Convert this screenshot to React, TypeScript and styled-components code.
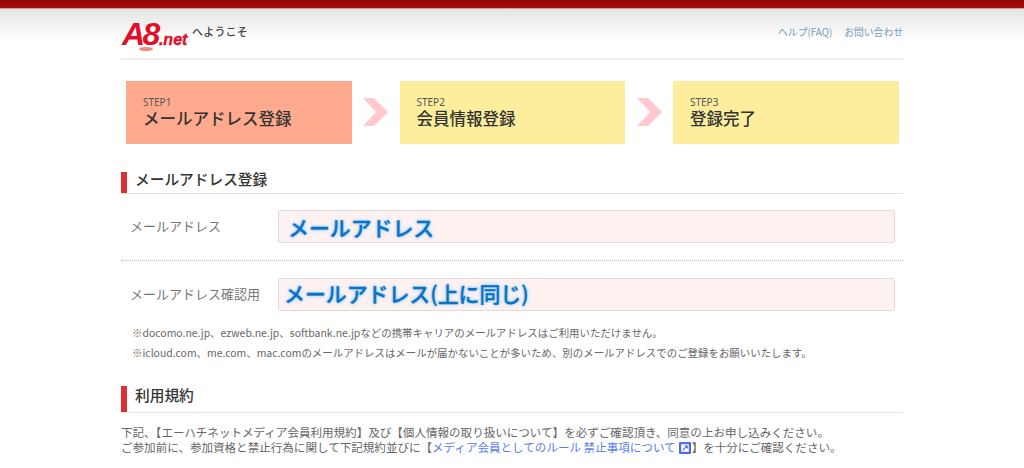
import React from "react";
import styled, { createGlobalStyle } from "styled-components";

const Global = createGlobalStyle`
  html, body { margin: 0; padding: 0; background: #fff; height: 468px; overflow: hidden; }
  body { font-family: "Noto Sans CJK JP", "Noto Sans", sans-serif; color: #666; }
`;

const TopBar = styled.div`
  height: 8px;
  background: linear-gradient(#8c0606, #b00a0a);
  border-bottom: 1px solid #c9a0a0;
`;
const HeaderBand = styled.header`
  background: linear-gradient(#e4e4e4, #fff 32px);
  height: 49px;
`;
const Wrap = styled.div`
  width: 782px;
  margin-left: 121px;
`;
const HeaderRow = styled(Wrap)`
  height: 49px;
  border-bottom: 2px solid #eee;
  display: flex;
  align-items: center;
  justify-content: space-between;
  box-sizing: content-box;
`;
const LogoBox = styled.div`
  display: flex;
  align-items: center;
  gap: 4px;
`;
const Logo = styled.div`
  position: relative;
  display: flex;
  align-items: baseline;
  color: #e0102a;
  font-family: "Liberation Sans", sans-serif;
  font-style: italic;
  font-weight: 700;
  width: 66px;
  height: 30px;
  margin-left: 1px;
  margin-top: 1px;
  white-space: nowrap;
`;
const LogoBig = styled.span`
  font-size: 32px;
  line-height: 30px;
  letter-spacing: -2.5px;
`;
const LogoSmall = styled.span`
  font-size: 16px;
  font-weight: 700;
  -webkit-text-stroke: 0.4px #e0102a;
  margin-left: 1px;
`;
const LogoOval = styled.i`
  position: absolute;
  left: 17px;
  top: 28px;
  width: 14px;
  height: 4px;
  border-radius: 50%;
  background: #eb8a80;
`;
const Welcome = styled.span`
  font-size: 11px;
  font-weight: 500;
  color: #444;
  margin-top: -6px;
  letter-spacing: .2px;
`;
const HeaderLinks = styled.nav`
  display: flex;
  gap: 12px;
  font-size: 9.8px;
  color: #6f9fb5;
  margin-top: -3px;
`;
const Steps = styled.div`
  display: grid;
  grid-template-columns: repeat(3, 225.5px);
  column-gap: 48px;
  padding: 23px 0 0 5px;
`;
const Step = styled.div<{ $active?: boolean }>`
  position: relative;
  height: 63px;
  box-sizing: border-box;
  padding: 15px 17px 0;
  background: ${(p) => (p.$active ? "#ffaa8e" : "#fdee9d")};
`;
const StepNum = styled.div`
  font-size: 10px;
  line-height: 12px;
  color: #555;
  font-family: "Noto Sans", sans-serif;
`;
const StepName = styled.div`
  font-size: 16.5px;
  line-height: 20px;
  font-weight: 500;
  color: #333;
`;
const Arrow = styled.svg`
  position: absolute;
  left: 237px;
  top: 17px;
  width: 25px;
  height: 28px;
`;
const Heading = styled.h2<{ $tall?: boolean }>`
  margin: 0;
  position: relative;
  font-size: 14.7px;
  font-weight: 500;
  color: #333;
  height: ${(p) => (p.$tall ? 26 : 21)}px;
  line-height: ${(p) => (p.$tall ? 17 : 13)}px;
  padding-left: 14px;
  border-bottom: 1px solid #e3e3e3;
  &::before {
    content: "";
    position: absolute;
    left: 0;
    top: 0;
    bottom: 0;
    width: 6px;
    background: #dc3034;
  }
`;
const FirstSection = styled.section`
  margin-top: 28px;
`;
const FieldRow = styled.div<{ $divider?: boolean }>`
  display: grid;
  grid-template-columns: 157px 617px;
  align-items: center;
  height: 33px;
  padding-top: ${(p) => (p.$divider ? 17 : 0)}px;
  border-top: ${(p) => (p.$divider ? "1px dotted #bbb" : "0")};
  margin-top: ${(p) => (p.$divider ? 17 : 16)}px;
  box-sizing: content-box;
`;
const FieldLabel = styled.div`
  padding-left: 9px;
  font-size: 13px;
  color: #777;
  margin-top: -2px;
`;
const InputBox = styled.div<{ $shift: number; $lift?: number }>`
  height: 33px;
  box-sizing: border-box;
  background: #fdf1f1;
  border: 1px solid #e0dcdc;
  border-radius: 2px;
  padding: 0 0 ${(p) => p.$lift ?? 0}px ${(p) => p.$shift}px;
  display: flex;
  align-items: center;
  font-size: 20.9px;
  font-weight: 500;
  color: #0b71c4;
  -webkit-text-stroke: 0.3px #0b71c4;
  text-shadow: 0 0 2px #9fd2f4, 0 0 3px #9fd2f4, 0 0 4px #b8dff8;
  white-space: nowrap;
`;
const Notes = styled.div`
  margin: 12px 0 0 11px;
  font-size: 10.45px;
  line-height: 20px;
  color: #666;
`;
const TermsSection = styled.section`
  margin-top: 23px;
`;
const Terms = styled.p`
  margin: 12px 0 0;
  font-size: 11.55px;
  line-height: 15px;
  color: #666;
  white-space: nowrap;
`;
const Link = styled.span`
  color: #5a7cf0;
`;
const ExtIcon = styled.svg`
  width: 12px;
  height: 12px;
  vertical-align: -2px;
  margin: 0 1px 0 3px;
`;

export default function App() {
  const steps = [
    { n: "STEP1", t: "メールアドレス登録", active: true },
    { n: "STEP2", t: "会員情報登録" },
    { n: "STEP3", t: "登録完了" },
  ];
  return (
    <>
      <Global />
      <TopBar />
      <HeaderBand>
        <HeaderRow>
          <LogoBox>
            <Logo>
              <LogoBig>A8</LogoBig>
              <LogoSmall>.net</LogoSmall>
              <LogoOval />
            </Logo>
            <Welcome>へようこそ</Welcome>
          </LogoBox>
          <HeaderLinks>
            <span>ヘルプ(FAQ)</span>
            <span>お問い合わせ</span>
          </HeaderLinks>
        </HeaderRow>
      </HeaderBand>
      <Wrap>
        <Steps>
          {steps.map((s, i) => (
            <Step key={s.n} $active={s.active}>
              <StepNum>{s.n}</StepNum>
              <StepName>{s.t}</StepName>
              {i < 2 && (
                <Arrow viewBox="0 0 25 28">
                  <path d="M0 0H11L25 14L11 28H0L13 14Z" fill="#ffc9cf" />
                </Arrow>
              )}
            </Step>
          ))}
        </Steps>
        <FirstSection>
          <Heading>メールアドレス登録</Heading>
          <FieldRow>
            <FieldLabel>メールアドレス</FieldLabel>
            <InputBox $shift={9}>メールアドレス</InputBox>
          </FieldRow>
          <FieldRow $divider>
            <FieldLabel>メールアドレス確認用</FieldLabel>
            <InputBox $shift={5} $lift={3}>メールアドレス(上に同じ)</InputBox>
          </FieldRow>
          <Notes>
            <div>※docomo.ne.jp、ezweb.ne.jp、softbank.ne.jpなどの携帯キャリアのメールアドレスはご利用いただけません。</div>
            <div>※icloud.com、me.com、mac.comのメールアドレスはメールが届かないことが多いため、別のメールアドレスでのご登録をお願いいたします。</div>
          </Notes>
        </FirstSection>
        <TermsSection>
          <Heading $tall>利用規約</Heading>
          <Terms>
            下記、【エーハチネットメディア会員利用規約】及び【個人情報の取り扱いについて】を必ずご確認頂き、同意の上お申し込みください。
            <br />
            ご参加前に、参加資格と禁止行為に関して下記規約並びに【<Link>メディア会員としてのルール 禁止事項について</Link>
            <ExtIcon viewBox="0 0 11 11">
              <rect width="11" height="11" rx="1" fill="#4a6cf0" />
              <rect x="2" y="2" width="7" height="7" fill="#fff" />
              <path d="M3.5 7.5L7.5 3.5M5 3.5H7.5V6" stroke="#4a6cf0" strokeWidth="1" fill="none" />
            </ExtIcon>
            】を十分にご確認ください。
          </Terms>
        </TermsSection>
      </Wrap>
    </>
  );
}
